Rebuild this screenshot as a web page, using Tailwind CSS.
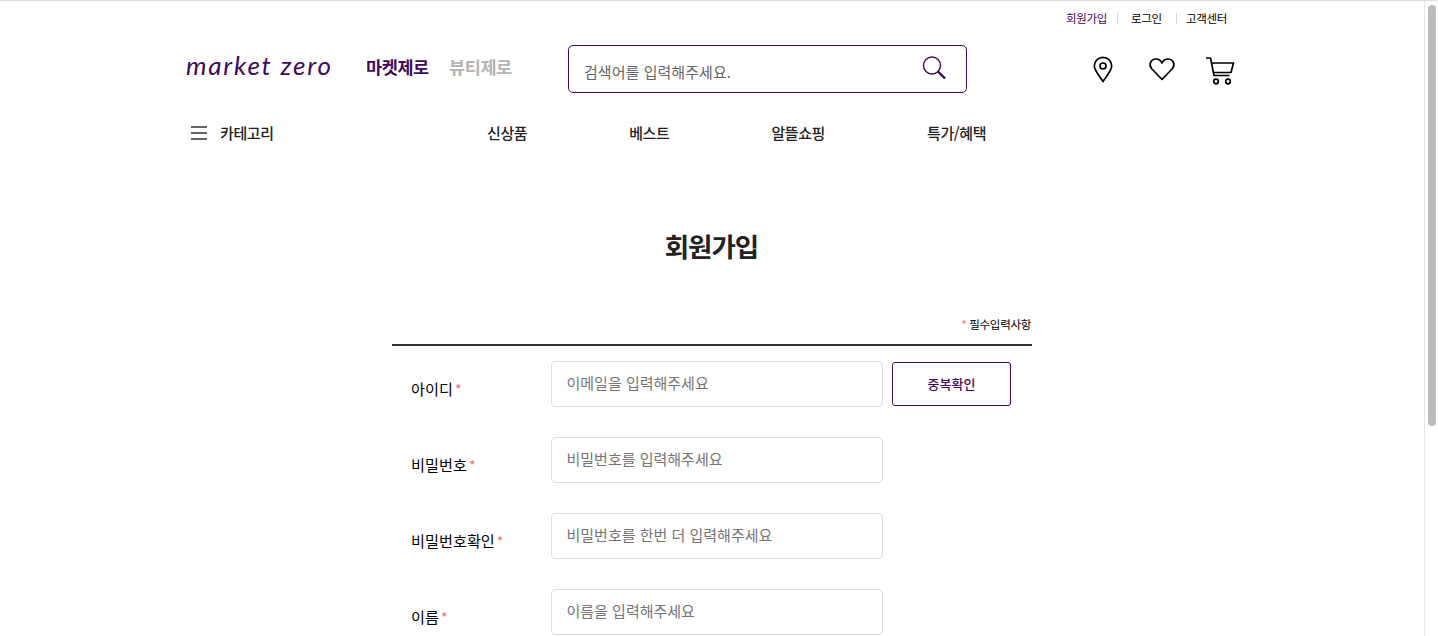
<!DOCTYPE html>
<html lang="ko">
<head>
    <meta charset="UTF-8">
    <meta name="viewport" content="width=device-width, initial-scale=1.0">
    <title>market zero</title>
    <script src="https://cdn.jsdelivr.net/npm/@tailwindcss/browser@4"></script>
</head>
<body class="overflow-hidden bg-white">
    <div class="flex h-[636px] border-t border-[#dedede] font-['Noto_Sans_CJK_KR','Noto_Sans',sans-serif] text-[#222]">
        <div class="flex-1 min-w-0 overflow-hidden">
            <header class="w-[1424px]">
                <div class="flex justify-end items-center h-[39px] pb-[4px] pr-[197px] text-[11.5px] tracking-[-0.3px] text-black">
                    <a class="text-[#3f0a5c]">회원가입</a>
                    <span class="ml-[10px] mr-[13px] w-px h-[11px] bg-[#d8d8d8]"></span>
                    <a>로그인</a>
                    <span class="ml-[14px] mr-[9px] w-px h-[11px] bg-[#d8d8d8]"></span>
                    <a>고객센터</a>
                </div>
                <div class="flex items-center h-[58px] pl-[186px]">
                    <a class="w-[180px] pb-[8px] font-['Lato',sans-serif] italic text-[26px] tracking-[1.800px] text-[#3f0a5c] leading-none whitespace-nowrap">market zero</a>
                    <a class="w-[83px] pb-[4px] text-[17.5px] font-bold tracking-[-0.4px] text-[#3f0a5c]">마켓제로</a>
                    <a class="w-[119px] pb-[4px] text-[17.5px] font-bold tracking-[-0.4px] text-[#b3b3b3]">뷰티제로</a>
                    <div class="flex items-center w-[399px] h-[48px] border border-[#3f0a5c] rounded-[5px] pl-[15px] pr-[19px]">
                        <span class="flex-1 pt-[6px] text-[15px] tracking-[0.05px] text-[#666]">검색어를 입력해주세요.</span>
                        <svg class="w-[25px] h-[25px] mb-[2px]" viewBox="0 0 25 25" fill="none" stroke="#3f0a5c">
                            <circle cx="10" cy="9.500" r="8.500" stroke-width="1.400"/>
                            <path d="M16 15.500l7 7" stroke-width="2.400"/>
                        </svg>
                    </div>
                    <div class="flex items-center ml-[122px]">
                        <svg class="w-[28px] h-[30px]" viewBox="0 0 28 30" fill="none" stroke="#000" stroke-width="1.700">
                            <path d="M14 27.500c-1.500-3-8.700-10.500-8.700-15.500a8.700 8.700 0 0 1 17.400 0c0 5-7.200 12.500-8.700 15.500z" stroke-linejoin="round"/>
                            <circle cx="14" cy="12" r="3"/>
                        </svg>
                        <svg class="ml-[31px] w-[28px] h-[26px]" viewBox="0 0 28 26" fill="none" stroke="#000" stroke-width="1.700">
                            <path d="M14 23.500L3.500 12.500C0.500 9 2.500 3 8 3c2.800 0 4.800 1.500 6 4 1.200-2.500 3.200-4 6-4 5.500 0 7.500 6 4.500 9.500z" stroke-linejoin="round"/>
                        </svg>
                        <svg class="ml-[29px] mt-[4px] w-[30px] h-[30px]" viewBox="0 0 30 30" fill="none" stroke="#000" stroke-width="1.700">
                            <path d="M1 2h4.500l3.500 17.500h15.500M6.500 7h22l-2.500 9.500H8.500" stroke-linejoin="round"/>
                            <circle cx="11" cy="25.500" r="2.300"/>
                            <circle cx="23" cy="25.500" r="2.300"/>
                        </svg>
                    </div>
                </div>
                <nav class="flex items-center h-[20px] mt-[25px] pl-[191px] text-[15px] font-medium tracking-[-0.4px] text-[#222]">
                    <svg class="w-[16px] h-[14px] mr-[13px]" viewBox="0 0 16 14" stroke="#333" stroke-width="1.400">
                        <path d="M0 1h16M0 7h16M0 13h16"/>
                    </svg>
                    <a class="w-[267px]">카테고리</a>
                    <div class="flex gap-[102px]">
                        <a>신상품</a>
                        <a>베스트</a>
                        <a>알뜰쇼핑</a>
                        <a>특가/혜택</a>
                    </div>
                </nav>
            </header>
            <main class="w-[640px] ml-[392px]">
                <h2 class="mt-[84px] pr-px text-center text-[26.5px] font-bold tracking-[-1px] leading-[38px] text-[#222]">회원가입</h2>
                <p class="mt-[51px] pr-px text-right text-[11.5px] leading-[16px] tracking-[-0.3px] text-black"><span class="text-[#e57373]">*</span> 필수입력사항</p>
                <div class="mt-[12px] border-t-2 border-[#333] pt-[15px] flex flex-col gap-[30px]">
                    <div class="flex items-start">
                        <label class="w-[159px] pl-[19px] pt-[15px] text-[15.200px] leading-[24px] text-black">아이디<span class="ml-[2px] text-[#e57373] text-[14px]">*</span></label>
                        <div class="flex items-center w-[332px] h-[46px] border border-[#ddd] rounded-[4px] pl-[14.500px] pb-[2px] text-[15px] text-[#757575]">이메일을 입력해주세요</div>
                        <button class="ml-[9px] mt-[1px] w-[119px] h-[44px] border border-[#3f0a5c] rounded-[3px] text-[13px] font-medium text-[#3f0a5c]">중복확인</button>
                    </div>
                    <div class="flex items-start">
                        <label class="w-[159px] pl-[19px] pt-[15px] text-[15.200px] leading-[24px] text-black">비밀번호<span class="ml-[2px] text-[#e57373] text-[14px]">*</span></label>
                        <div class="flex items-center w-[332px] h-[46px] border border-[#ddd] rounded-[4px] pl-[14.500px] pb-[2px] text-[15px] text-[#757575]">비밀번호를 입력해주세요</div>
                    </div>
                    <div class="flex items-start">
                        <label class="w-[159px] pl-[19px] pt-[15px] text-[15.200px] leading-[24px] text-black">비밀번호확인<span class="ml-[2px] text-[#e57373] text-[14px]">*</span></label>
                        <div class="flex items-center w-[332px] h-[46px] border border-[#ddd] rounded-[4px] pl-[14.500px] pb-[2px] text-[15px] text-[#757575]">비밀번호를 한번 더 입력해주세요</div>
                    </div>
                    <div class="flex items-start">
                        <label class="w-[159px] pl-[19px] pt-[15px] text-[15.200px] leading-[24px] text-black">이름<span class="ml-[2px] text-[#e57373] text-[14px]">*</span></label>
                        <div class="flex items-center w-[332px] h-[46px] border border-[#ddd] rounded-[4px] pl-[14.500px] pb-[2px] text-[15px] text-[#757575]">이름을 입력해주세요</div>
                    </div>
                </div>
            </main>
        </div>
        <div class="w-[14px] shrink-0 border-l border-[#e5e5e5] pl-[3px] pt-[4px]">
            <div class="w-[8px] h-[421px] rounded-full bg-[#bcbcbc]"></div>
        </div>
    </div>
</body>
</html>
